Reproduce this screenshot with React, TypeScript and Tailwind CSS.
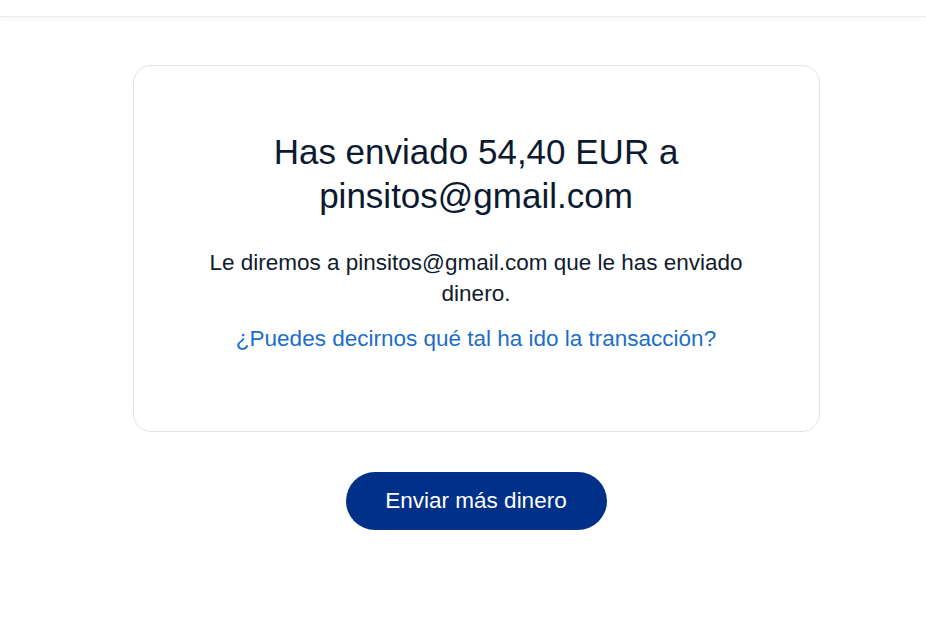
export default function App() {
  return (
    <div
      className="min-h-[638px] bg-white"
      style={{ fontFamily: '"Liberation Sans", Arial, sans-serif' }}
    >
      {/* Top bar */}
      <div className="h-[17px] bg-white border-b border-[#ededed] shadow-[0_2px_4px_rgba(0,0,0,0.04)]" />

      <div className="flex flex-col items-center pl-[26px] pt-[48px]">
        {/* Confirmation card */}
        <div className="w-[687px] h-[367px] rounded-[18px] border border-[#e3e3e3] bg-white flex flex-col items-center pt-[64px] px-[70px]">
          <h1 className="text-[35px] leading-[44px] text-[#0b1a30] text-center font-normal w-[440px]">
            Has enviado 54,40 EUR a pinsitos@gmail.com
          </h1>
          <p className="mt-[29px] text-[22.5px] leading-[31px] text-[#101c2e] text-center w-[540px]">
            Le diremos a pinsitos@gmail.com que le has enviado dinero.
          </p>
          <a
            href="#"
            className="mt-[14px] text-[22.5px] leading-[31px] text-[#1b6ec8] text-center"
          >
            ¿Puedes decirnos qué tal ha ido la transacción?
          </a>
        </div>

        {/* Action */}
        <button className="mt-[40px] w-[261px] h-[58px] rounded-full bg-[#003087] text-white text-[22.5px]">
          Enviar más dinero
        </button>
      </div>
    </div>
  );
}
